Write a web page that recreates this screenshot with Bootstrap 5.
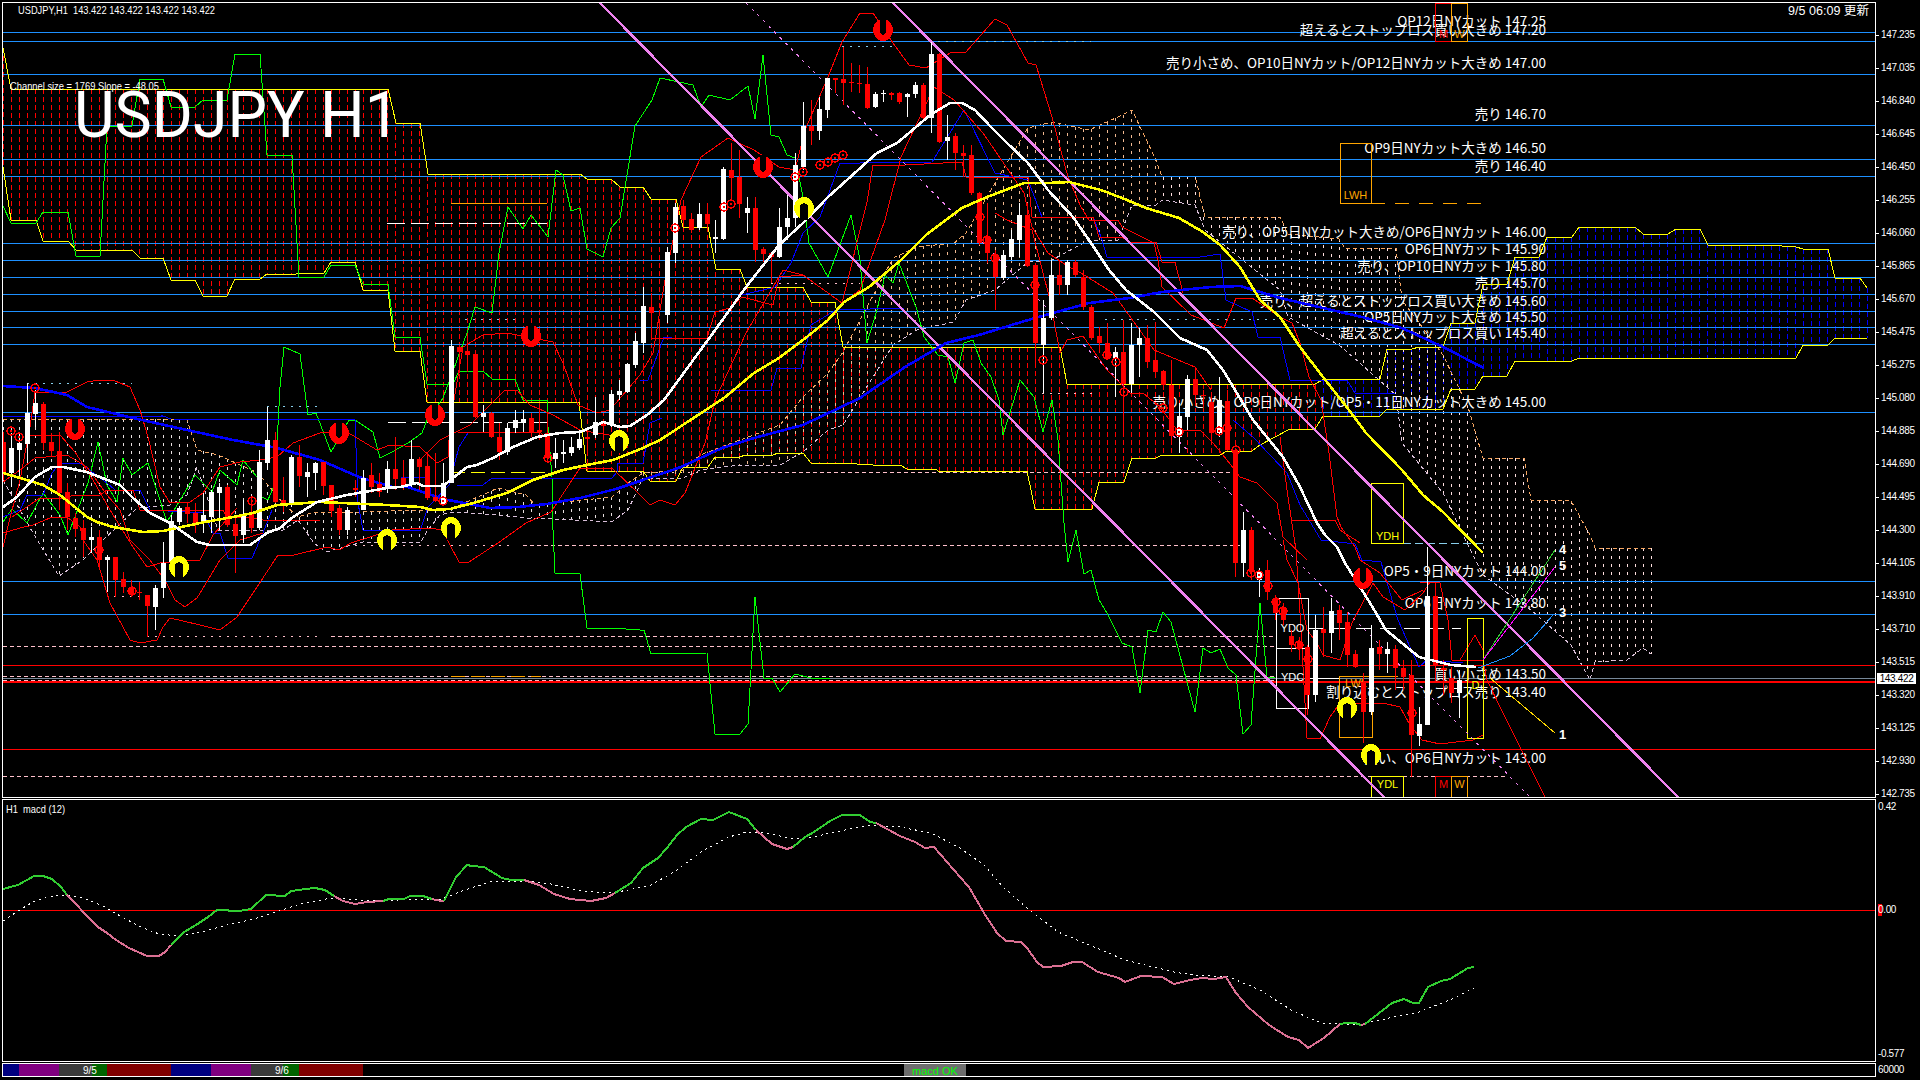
<!DOCTYPE html>
<html lang="ja">
<head>
  <meta charset="UTF-8">
  <title>USDJPY H1</title>
  <link href="https://cdn.jsdelivr.net/npm/bootstrap@5.3.0/dist/css/bootstrap.min.css" rel="stylesheet" />
  <style>
    html, body { background: #000; height: 100%; overflow: hidden; }
    body { padding: 2px 0 0 2px; font-family: "Liberation Sans", sans-serif; font-size: 10px; }
    svg { display: block; }
    svg text { font-family: "Liberation Sans", sans-serif; }
    .chart-main { width: 1874px; height: 796px; }
    .chart-macd { width: 1874px; height: 263px; }
    .chart-strip { width: 1874px; height: 14px; }
    .row-gap { margin-top: 1px; }
    .axis { width: 44px; color: #fff; letter-spacing: -.35px; line-height: 12px; }
    .axis-main { padding-top: 16.5px; height: 796px; }
    .axis-main > .price { height: 33px; flex-shrink: 0; }
    .tick { width: 3px; height: 1px; background: #fff; margin-right: 2px; flex-shrink: 0; }
    .last-price { top: 671px; left: 1px; width: 39px; height: 11px; background: #fff; color: #000; line-height: 11px; text-align: center; }
    .axis-macd { padding: 2px 0 0 2px; height: 263px; }
    .axis-macd .zero { margin-top: 91px; background: linear-gradient(#f00, #f00) no-repeat 0 0 / 4px 100%; }
    .axis-macd .low { margin-top: 132px; }
    .axis-strip { padding: 1px 0 0 2px; }
    .seg { height: 12px; line-height: 14px; color: #fff; white-space: nowrap; flex-shrink: 0; }
    .seg-navy { background: #000080; }
    .seg-purple { background: #800080; }
    .seg-gray { background: #3a3a3a; position: relative; z-index: 1; }
    .seg-green { background: #006400; }
    .seg-maroon { background: #800000; }
    .seg-macd { margin-left: 541px; background: #6e6e6e; color: #0f0; font-size: 11px; text-align: center; }
  </style>
</head>
<body class="bg-black">
<div class="d-flex">
  <div class="chart-main border border-white" id="mainChart"></div>
  <div class="axis axis-main d-flex flex-column position-relative" id="mainAxis"></div>
</div>
<div class="d-flex row-gap">
  <div class="chart-macd border border-white" id="macdChart"></div>
  <div class="axis axis-macd d-flex flex-column">
    <div>0.42</div>
    <div class="zero">0.00</div>
    <div class="low">-0.577</div>
  </div>
</div>
<div class="d-flex row-gap">
  <div class="chart-strip border border-white d-flex">
    <div class="seg seg-navy" style="width:16px"></div>
    <div class="seg seg-purple" style="width:40px"></div>
    <div class="seg seg-gray ps-4" style="width:33px">9/5</div>
    <div class="seg seg-green" style="width:15px"></div>
    <div class="seg seg-maroon" style="width:64px"></div>
    <div class="seg seg-navy" style="width:40px"></div>
    <div class="seg seg-purple" style="width:40px"></div>
    <div class="seg seg-gray ps-4" style="width:32px">9/6</div>
    <div class="seg seg-green" style="width:16px"></div>
    <div class="seg seg-maroon" style="width:64px"></div>
    <div class="seg seg-macd" style="width:62px">macd OK</div>
  </div>
  <div class="axis axis-strip">60000</div>
</div>

<script>
  // everything below is in page pixels, read off the chart. bars sit every 8px: x = 3 + 8i
  const DODGER = "#1e90ff", RED = "#ff0000", YELLOW = "#ffff00", LIME = "#00ff00", BLUE = "#0000ff";
  const PINK = "#ffc0cb", VIOLET = "#ee82ee", ORANGE = "#ffa500", SKY = "#87ceeb", SAND = "#f4a460";

  // [bar, colour, high, body top, body bottom, low]
  const candles = [
    [0,"r",432,442,472,480],[1,"w",433,448,473,487],[2,"w",433,443,450,477],[3,"w",383,413,444,463],[4,"w",390,403,414,427],
    [5,"r",402,404,443,450],[6,"r",433,442,451,457],[7,"r",432,451,493,510],[8,"r",483,492,517,530],[9,"r",513,518,529,537],
    [10,"r",520,528,540,557],[11,"w",527,537,540,553],[12,"r",530,537,560,567],[13,"w",555,557,560,592],[14,"r",557,557,580,597],
    [15,"r",572,579,587,593],[16,"r",580,587,595,597],[17,"r",582,592,593,600],[18,"r",595,595,606,637],[19,"w",585,588,607,630],
    [20,"w",542,563,588,598],[21,"w",515,521,562,563],[22,"w",506,508,522,525],[23,"r",502,507,514,523],[24,"r",503,513,524,533],
    [25,"w",493,515,521,533],[26,"w",490,492,517,533],[27,"w",483,487,493,530],[28,"r",485,487,525,527],[29,"r",517,524,536,573],
    [30,"w",500,515,535,543],[31,"r",497,513,528,533],[32,"w",450,462,528,530],[33,"w",407,440,463,470],[34,"r",432,440,502,503],
    [35,"r",477,500,503,512],[36,"w",455,457,503,507],[37,"r",445,457,476,487],[38,"w",463,472,477,497],[39,"w",462,463,473,490],
    [40,"r",462,462,486,495],[41,"r",485,485,511,517],[42,"r",505,508,530,535],[43,"w",507,510,530,535],[44,"r",480,488,490,497],
    [45,"w",470,478,510,510],[46,"r",463,475,487,493],[47,"r",473,484,492,497],[48,"w",461,469,488,493],[49,"r",437,469,479,490],
    [50,"r",460,478,486,490],[51,"w",440,459,483,487],[52,"r",457,459,467,490],[53,"r",455,466,498,500],[54,"r",453,497,501,502],
    [55,"w",463,483,504,505],[56,"w",340,346,483,483],[57,"r",347,347,352,373],[58,"r",333,351,355,372],[59,"r",353,354,417,418],
    [60,"w",405,413,417,432],[61,"r",412,413,437,438],[62,"r",423,437,452,460],[63,"w",423,428,452,455],[64,"w",410,420,428,433],
    [65,"w",410,419,423,432],[66,"r",413,418,432,437],[67,"r",403,430,432,440],[68,"r",413,433,458,462],[69,"w",438,453,459,468],
    [70,"w",440,452,454,463],[71,"w",437,447,453,456],[72,"w",430,439,448,450],[73,"r",430,437,439,453],[74,"w",397,422,435,438],
    [75,"r",420,423,426,440],[76,"w",390,394,425,427],[77,"w",380,391,395,400],[78,"w",363,364,392,393],[79,"w",333,341,365,368],
    [80,"w",287,306,343,353],[81,"r",293,307,313,340],[82,"r",323,338,339,400],[83,"w",247,252,315,323],[84,"w",203,207,253,263],
    [85,"r",200,206,220,227],[86,"r",213,219,230,233],[87,"w",203,214,228,230],[88,"r",203,214,224,230],[89,"w",220,237,239,253],
    [90,"w",167,169,239,240],[91,"r",143,170,178,200],[92,"r",150,177,204,218],[93,"w",197,208,213,233],[94,"r",197,208,250,262],
    [95,"r",247,249,254,262],[96,"r",253,253,257,283],[97,"w",208,227,257,258],[98,"w",195,218,227,240],[99,"w",153,165,218,227],
    [100,"w",102,126,167,170],[101,"r",100,126,131,145],[102,"w",97,109,131,140],[103,"w",78,78,110,118],[104,"r",78,78,80,93],
    [105,"r",47,79,83,105],[106,"r",63,82,83,92],[107,"r",65,83,84,93],[108,"r",67,84,108,109],[109,"w",92,94,107,108],
    [110,"w",90,93,94,102],[111,"r",92,93,95,100],[112,"r",92,93,102,104],[113,"w",93,94,97,117],[114,"w",82,85,94,98],
    [115,"r",83,85,118,120],[116,"w",42,54,118,133],[117,"r",53,54,142,143],[118,"w",115,137,141,160],[119,"r",133,136,153,170],
    [120,"r",145,153,156,177],[121,"r",145,155,193,195],[122,"r",192,193,243,245],[123,"r",203,237,253,263],[124,"r",250,255,277,310],
    [125,"w",250,255,278,280],[126,"w",230,239,257,260],[127,"w",203,215,240,257],[128,"r",203,215,266,267],[129,"r",263,265,343,363],
    [130,"w",300,318,345,393],[131,"w",260,275,318,320],[132,"r",260,275,285,295],[133,"w",260,262,285,295],[134,"r",260,262,275,277],
    [135,"r",270,277,307,310],[136,"r",305,307,338,340],[137,"r",327,336,343,353],[138,"r",323,343,358,360],[139,"w",347,352,358,397],
    [140,"r",320,352,384,433],[141,"w",323,345,384,393],[142,"w",328,338,345,377],[143,"r",325,338,362,368],[144,"r",322,360,372,378],
    [145,"r",370,371,385,390],[146,"r",360,385,436,442],[147,"w",403,416,437,453],[148,"w",375,379,417,430],[149,"r",368,379,395,406],
    [150,"r",390,395,396,407],[151,"r",395,402,433,445],[152,"w",377,400,433,437],[153,"r",390,401,450,451],[154,"r",449,450,563,577],
    [155,"w",512,530,563,577],[156,"r",527,530,572,580],[157,"w",568,572,580,597],[158,"r",560,570,592,600],[159,"r",595,598,613,620],
    [160,"r",603,608,620,625],[161,"r",630,636,645,652],[162,"r",637,642,648,660],[163,"r",645,647,695,715],[164,"w",615,630,695,702],
    [165,"r",607,629,633,657],[166,"w",598,611,633,653],[167,"r",605,610,623,640],[168,"r",612,622,655,667],[169,"r",650,654,667,668],
    [170,"r",673,682,712,743],[171,"w",625,648,712,715],[172,"r",640,647,654,670],[173,"w",642,649,654,673],[174,"r",645,649,668,690],
    [175,"r",660,668,677,690],[176,"r",660,675,735,777],[177,"w",707,724,736,746],[178,"w",547,596,725,725],[179,"r",583,596,665,683],
    [180,"r",660,668,670,695],[181,"r",667,678,693,703],[182,"w",670,680,693,718]
  ];

  const hLines = [
    [32.5,DODGER],[41.5,DODGER],[74.5,DODGER],[125.5,DODGER],[159.5,DODGER],[176.5,DODGER],[243.5,DODGER],[260.5,DODGER],
    [277.5,DODGER],[294.5,DODGER],[311.5,DODGER],[327.5,DODGER],[344.5,DODGER],[412.5,DODGER],[581.5,DODGER],[614.5,DODGER],
    [665.5,RED],[749.5,RED]
  ];
  // [x1, x2, y, colour, dash]
  const segments = [
    [3,1276,646.5,PINK,"4 3"],[3,1507,776.5,PINK,"4 3"],[3,1276,676.5,PINK,"4 3"],[3,1276,680.5,PINK,"4 3"],
    [331,1276,636.5,PINK,"4 3"],[523,1240,545.5,PINK,"4 3"],[715,1240,472.5,PINK,"4 3"],
    [147,322,636.5,PINK,"2 6"],[114,139,596.5,PINK,"2 6"],[347,514,545.5,PINK,"2 6"],[771,860,283.5,PINK,"2 6"],[640,707,472.5,PINK,"2 6"],[1042,1092,393.5,PINK,"2 6"],
    [842,898,46.5,SKY,"2 6"],[938,1091,41.5,SKY,"2 6"],[27,132,383.5,SKY,"2 6"],[267,322,406.5,SKY,"2 6"],[465,515,319.5,SKY,"2 6"],[1105,1290,319.5,SKY,"2 6"],[1403,1483,543.5,SKY,"8 4"],
    [387,547,223.5,"#fff","18 6"],[388,547,422.5,"#fff","18 6"],[1308,1461,628.5,"#fff","16 8"],[1308,1340,678.5,"#fff",""],
    [451,547,203.5,ORANGE,""],[451,547,472.5,YELLOW,"14 6"],[451,541,676.5,ORANGE,"14 6"],[1371,1483,203.5,ORANGE,"14 10"],[1372,1398,676.5,ORANGE,""],
    [1371,1468,797,YELLOW,"3 9"]
  ];

  // ichimoku cloud 1 edges, the yellow lines
  const kumoUp = [[3,48],[11,89],[388,89],[396,123],[420,123],[428,174],[580,174],[587,179],[611,179],[620,187],[643,187],[651,199],[676,199],[683,227],[708,227],[716,269],[740,269],[747,287],[803,287],[811,302],[835,302],[843,347],[1060,347],[1067,384],[1315,384],[1324,379],[1380,379],[1387,349],[1412,349],[1419,347],[1443,347],[1451,323],[1475,323],[1483,284],[1507,284],[1515,257],[1539,257],[1547,237],[1572,237],[1579,227],[1635,227],[1643,234],[1668,234],[1676,229],[1700,229],[1708,245],[1768,245],[1796,247],[1803,249],[1828,249],[1835,278],[1860,278],[1867,288]];
  const kumoDown = [[3,167],[11,220],[36,220],[43,241],[68,241],[76,250],[132,250],[140,258],[163,258],[171,280],[195,280],[203,296],[227,296],[235,279],[260,279],[267,274],[296,274],[299,273],[324,273],[331,262],[355,262],[363,290],[388,290],[395,351],[420,351],[427,402],[579,402],[587,471],[643,471],[650,481],[676,481],[683,467],[708,467],[715,457],[740,457],[745,455],[773,455],[778,453],[803,453],[811,463],[840,463],[873,465],[900,465],[907,469],[936,469],[938,471],[1027,471],[1035,509],[1092,509],[1099,482],[1124,482],[1132,458],[1156,458],[1162,455],[1220,455],[1227,451],[1252,451],[1260,445],[1290,429],[1315,429],[1323,416],[1380,416],[1387,409],[1443,409],[1451,389],[1475,389],[1483,376],[1507,376],[1515,361],[1572,361],[1579,358],[1796,358],[1803,345],[1828,345],[1835,338],[1867,338]];

  // the pale cloud, [x, top, bottom]
  const pale = [[3,419,480],[33,419,533],[59,419,576],[83,419,560],[100,419,543],[137,419,508],[170,419,505],[187,420,495],[197,450,467],[218,455,530],[258,473,530],[283,503,530],[298,517,520],[314,512,543],[326,512,552],[363,512,542],[420,510,543],[428,510,530],[440,510,515],[453,508,512],[498,488,515],[526,495,518],[535,505,518],[612,497,522],[628,483,510],[643,473,478],[683,470,478],[700,455,470],[740,440,465],[780,425,465],[803,397,452],[828,373,430],[843,352,425],[893,258,345],[917,247,330],[954,243,322],[966,233,300],[995,183,290],[1028,128,262],[1052,122,260],[1089,130,240],[1118,117,240],[1132,110,205],[1156,160,205],[1162,177,200],[1195,176,205],[1205,217,230],[1280,217,290],[1288,234,317],[1339,239,345],[1345,248,350],[1396,248,395],[1402,300,443],[1443,355,493],[1468,407,545],[1483,458,575],[1524,458,605],[1531,500,610],[1571,501,645],[1590,535,680],[1595,548,662],[1627,548,660],[1643,548,648],[1651,548,654]];

  const green1 = [[3,206],[11,223],[36,223],[43,212],[68,212],[76,256],[100,256],[107,126],[132,126],[140,79],[163,79],[171,107],[195,107],[203,100],[227,100],[235,54],[260,54],[267,155],[292,155],[299,277],[324,277],[331,265],[355,265],[363,284],[388,284],[395,337],[420,337],[427,384],[453,384],[459,371],[483,371],[492,379],[515,379],[523,400],[547,400],[548,427],[552,477],[553,530],[555,573],[580,574],[587,628],[612,628],[640,630],[644,630],[651,654],[707,653],[715,734],[740,734],[748,724],[755,597],[764,678],[772,678],[780,692],[795,674],[811,678],[830,678]];
  const green2 = [[3,522],[12,509],[27,523],[43,493],[60,515],[68,535],[88,483],[98,442],[107,485],[117,502],[123,458],[132,475],[148,463],[167,522],[195,475],[212,492],[220,470],[237,485],[243,460],[257,477],[258,495],[268,500],[275,483],[280,387],[284,347],[300,354],[306,400],[308,415],[316,413],[331,452],[349,420],[355,420],[373,432],[380,458],[392,452],[408,443],[422,433],[427,420],[443,398],[467,333],[475,307],[492,313],[499,253],[508,207],[523,229],[531,215],[548,237],[556,170],[563,175],[571,211],[580,208],[587,249],[603,257],[611,228],[620,218],[635,126],[652,100],[660,78],[693,85],[701,107],[709,95],[730,100],[748,86],[755,119],[763,55],[771,135],[779,137],[787,155],[795,158],[803,197],[809,243],[828,277],[851,215],[860,260],[867,343],[877,310],[885,275],[893,283],[899,263],[917,310],[924,337],[938,355],[948,357],[955,383],[964,343],[973,340],[981,363],[991,377],[999,400],[1003,435],[1013,403],[1020,380],[1034,397],[1043,432],[1052,400],[1058,440],[1064,523],[1068,562],[1076,530],[1084,574],[1091,570],[1099,600],[1107,613],[1122,643],[1132,647],[1140,693],[1148,630],[1156,632],[1163,612],[1171,622],[1195,712],[1203,648],[1211,653],[1220,649],[1228,668],[1236,675],[1243,734],[1251,725],[1260,603],[1267,677],[1275,678]];

  const whiteMa = [[3,507],[17,497],[35,477],[52,467],[63,467],[87,472],[120,485],[133,498],[150,513],[170,523],[197,542],[210,545],[250,545],[267,533],[280,528],[293,517],[317,502],[347,495],[387,488],[400,487],[417,483],[423,486],[443,486],[453,478],[467,467],[477,465],[493,458],[513,447],[537,437],[560,433],[580,432],[597,425],[603,422],[620,427],[630,426],[647,415],[664,400],[713,333],[746,287],[779,245],[803,223],[828,197],[877,153],[897,143],[909,133],[930,115],[950,103],[962,103],[975,110],[991,127],[1007,143],[1028,163],[1048,190],[1073,217],[1089,240],[1109,270],[1126,290],[1154,312],[1180,338],[1207,350],[1223,370],[1253,420],[1283,457],[1300,487],[1317,523],[1325,535],[1337,547],[1345,563],[1370,603],[1386,630],[1419,657],[1451,665],[1476,667]];
  const yellowMa = [[3,473],[27,480],[43,485],[60,495],[87,517],[97,522],[113,527],[143,532],[163,531],[177,528],[200,523],[233,517],[253,513],[277,505],[320,502],[387,505],[420,507],[433,510],[450,509],[477,502],[507,493],[533,480],[563,470],[587,465],[613,460],[643,448],[660,440],[724,398],[754,373],[779,358],[803,340],[828,320],[844,302],[869,287],[901,260],[926,235],[962,208],[987,197],[1024,183],[1048,183],[1069,182],[1101,190],[1122,198],[1146,208],[1179,218],[1203,232],[1220,245],[1240,267],[1260,300],[1280,317],[1300,347],[1323,377],[1349,410],[1366,433],[1402,470],[1423,495],[1443,512],[1483,553]];
  const blueMa = [[3,386],[35,388],[67,395],[87,407],[133,418],[187,430],[233,440],[277,448],[320,460],[359,477],[392,487],[408,487],[443,499],[490,508],[518,507],[547,504],[580,498],[616,489],[640,481],[681,467],[722,448],[754,438],[803,425],[860,398],[905,367],[946,343],[979,335],[1028,320],[1089,303],[1130,298],[1162,292],[1211,287],[1240,286],[1260,292],[1280,298],[1362,317],[1402,328],[1443,347],[1484,368]];

  const thinBlue = [
    [[3,517],[20,510],[27,495],[43,495],[52,473],[60,463],[80,463],[107,483],[115,490],[140,490],[150,510],[203,513],[213,533],[220,533],[228,558],[252,558],[263,533],[272,510]],
    [[3,417],[163,416],[171,419],[355,420],[358,503],[363,530],[420,531],[428,507],[449,485],[459,447],[468,433]],
    [[401,477],[428,477],[431,493]],
    [[457,485],[483,485],[492,478],[612,478],[617,472],[618,463],[643,463],[650,423],[662,418]],
    [[640,380],[648,380],[664,337],[672,337]],
    [[711,390],[771,390],[777,368],[801,368],[811,325],[836,310],[905,308]],
    [[742,295],[775,287],[791,263],[803,233],[820,217],[840,163],[860,163],[932,162],[964,110],[995,173],[1028,180],[1042,217],[1093,217],[1101,237],[1107,257],[1200,257],[1220,254],[1226,300],[1252,312],[1258,337],[1280,337],[1290,380],[1347,380],[1355,393],[1395,393]],
    [[1233,420],[1253,437],[1287,473],[1300,505],[1321,540],[1355,544],[1362,560],[1381,562],[1398,620],[1419,667],[1427,660],[1463,663]]
  ];
  const thinRed = [
    [[3,533],[20,528],[33,525],[50,518],[67,517],[80,527],[83,540],[97,560],[110,603],[130,640],[140,643],[157,640],[163,627],[170,618],[200,625],[220,630],[237,617],[257,587],[278,555],[294,555],[327,547],[339,550],[351,543],[392,530],[428,528],[443,530],[449,543],[459,562],[469,562],[498,543],[526,523],[551,512],[580,468],[612,468],[640,495],[650,505],[660,500],[675,505],[685,493],[705,443],[715,400],[746,333],[783,270],[803,275],[842,303],[860,290],[885,220],[901,157],[934,87],[954,100],[983,133],[1024,193],[1032,227],[1048,253],[1069,267],[1081,273],[1113,293],[1154,350],[1195,367],[1211,390]],
    [[3,547],[10,518],[20,480],[30,427],[35,392],[65,393],[87,382],[100,380],[115,381],[130,387],[140,410],[148,437],[160,487],[170,503],[190,502],[203,493],[220,467],[240,462],[260,460],[277,457],[293,443],[320,433],[347,432],[377,450],[390,445],[420,447],[437,463],[448,457],[450,423],[463,347],[483,335],[507,333],[553,342],[563,363],[578,405],[597,413],[610,410],[640,375],[653,353],[665,280],[681,200],[701,157],[728,138],[754,150],[779,167],[795,170],[805,130],[828,77],[842,42],[860,13],[873,13],[893,43],[909,65],[926,68],[950,53],[966,52],[995,19],[1007,25],[1028,63],[1036,65],[1052,117],[1068,177],[1081,207],[1089,220],[1118,220],[1122,227],[1154,243],[1158,260],[1162,287],[1191,315],[1224,328],[1236,298],[1252,298],[1280,317],[1292,323],[1300,343],[1309,377],[1321,400],[1329,453],[1337,517],[1341,527],[1355,547],[1360,560],[1380,573],[1402,600],[1423,590]],
    [[3,482],[20,470],[35,458],[67,455],[87,467],[107,495],[120,510],[130,540],[150,560],[165,580],[175,600],[185,607],[197,598],[220,560],[240,540],[263,533]],
    [[12,517],[40,498],[67,498],[73,495],[100,495],[107,490],[133,490],[140,510],[223,510],[227,517],[250,517],[263,520],[320,520]],
    [[30,435],[60,435],[75,452],[93,480],[110,510],[133,547],[147,567],[160,563],[200,560],[213,535],[237,508]],
    [[420,460],[440,440],[470,425],[505,390],[517,390],[530,405],[553,415],[580,430],[620,437]],
    [[458,432],[540,432],[548,440]],
    [[652,338],[707,338],[715,312],[730,308],[742,297],[773,305],[779,277],[803,275],[842,303],[867,202],[873,165],[905,165],[962,162],[966,177],[1028,177],[1032,217],[1093,217],[1099,237],[1122,237],[1130,242],[1156,242],[1162,262],[1175,262],[1183,293]],
    [[995,213],[1007,220],[1032,230],[1050,300],[1060,353],[1067,340],[1083,336],[1107,370],[1120,383],[1130,393],[1143,393],[1160,407],[1177,430],[1200,430],[1213,443],[1227,460],[1240,477],[1257,483],[1277,503],[1283,537],[1307,560]],
    [[1280,437],[1288,497],[1296,550],[1300,613],[1307,738],[1320,739],[1330,717],[1340,703],[1383,703],[1400,707],[1410,725],[1422,740],[1440,744],[1473,740],[1483,735]],
    [[1283,540],[1287,560],[1298,583],[1307,630],[1317,643],[1323,655],[1340,660],[1352,623],[1373,583],[1383,597],[1405,610],[1423,593],[1430,582],[1440,583],[1448,620],[1452,660],[1483,660],[1487,680],[1503,713],[1545,797]],
    [[1291,520],[1335,520],[1340,530],[1360,543]],
    [[1420,582],[1438,582]],
    [[1460,660],[1475,635],[1483,650]]
  ];

  const redMarks = [[531,336],[883,30],[763,167],[75,429],[339,433],[435,415],[1363,578]];
  const yellowMarks = [[179,567],[387,540],[451,528],[619,441],[804,208],[1347,708],[1371,755]];
  const rings = [[35,388],[11,431],[19,437],[99,550],[132,591],[252,501],[548,458],[443,501],[675,228],[724,207],[731,204],[795,177],[803,172],[820,165],[828,162],[835,158],[843,155],[980,217],[987,240],[995,258],[1035,285],[1043,360],[1107,355],[1116,362],[1124,392],[1163,408],[1179,432],[1219,431],[1227,428],[1236,450],[1251,573],[1259,575],[1268,586],[1276,602],[1283,611],[1299,645],[1308,659],[1412,713]];

  // [text, y centre]
  const labels = [
    ["OP12日NYカット 147.25",21],["超えるとストップロス買い大きめ 147.20",30],["売り小さめ、OP10日NYカット/OP12日NYカット大きめ 147.00",63],
    ["売り 146.70",114],["OP9日NYカット大きめ 146.50",148],["売り 146.40",166],["売り、OP5日NYカット大きめ/OP6日NYカット 146.00",232],
    ["OP6日NYカット 145.90",249],["売り、OP10日NYカット 145.80",266],["売り 145.70",283],["売り、超えるとストップロス買い大きめ 145.60",301],
    ["OP5日NYカット大きめ 145.50",317],["超えるとストップロス買い 145.40",333],["売り小さめ、OP9日NYカット/OP5・11日NYカット大きめ 145.00",402],
    ["OP5・9日NYカット 144.00",571],["OP6日NYカット 143.80",603],["買い小さめ 143.50",674],["割り込むとストップロス売り 143.40",692],["買い、OP6日NYカット 143.00",758]
  ];
  // [x, y, w, h, colour, text, text y]
  const boxes = [
    [1340,143,31,60,ORANGE,"LWH",199],[1435.5,3,16,38,RED,"M",38],[1451.5,3,16,38,ORANGE,"W",38],
    [1371.5,483,32,60,YELLOW,"YDH",540],[1276.5,598,32,50,"#fff","YDO",632],[1276.5,648,32,60,"#fff","YDC",681],
    [1339.5,676,33,61,ORANGE,"LWL",687],[1467.5,618,16,120,YELLOW,"D",689],
    [1371.5,776,32,21,YELLOW,"YDL",788],[1435.5,776,16,21,RED,"M",788],[1451.5,776,16,21,ORANGE,"W",788]
  ];

  function interp(line, x) {
    if (x <= line[0][0]) return line[0][1];
    for (let i = 1; i < line.length; i++) {
      if (x <= line[i][0]) {
        const a = line[i - 1], b = line[i];
        return b[0] === a[0] ? b[1] : a[1] + (b[1] - a[1]) * (x - a[0]) / (b[0] - a[0]);
      }
    }
    return null;
  }

  const poly = (pts, color, width = 1, dash = "") =>
    `<polyline points="${pts.join(" ")}" fill="none" stroke="${color}" stroke-width="${width}" stroke-dasharray="${dash}"/>`;
  const vline = (x, y1, y2, color, dash = "") =>
    `<line x1="${x}" x2="${x}" y1="${y1}" y2="${y2}" stroke="${color}" stroke-dasharray="${dash}"/>`;
  const hline = (x1, x2, y, color, dash = "") =>
    `<line x1="${x1}" x2="${x2}" y1="${y}" y2="${y}" stroke="${color}" stroke-dasharray="${dash}"/>`;

  // the arrow marks: a ring with a slit, yellow opens downward, red upward
  function horseshoe([x, y], color, flip, slit) {
    return `<g transform="translate(${x} ${y}) scale(1 ${flip ? -1 : 1})">
      <ellipse rx="10" ry="11" fill="${color}"/>
      <path d="M${-slit},12 L${-slit},-2 Q0,-8 ${slit},-2 L${slit},12 Z" fill="#000"/>
    </g>`;
  }

  let main = "";

  // cloud hatching
  for (let x = 3; x < 1870; x += 8) {
    const up = interp(kumoUp, x), down = interp(kumoDown, x);
    if (up !== null && down !== null) main += vline(x + .5, up, down, x < 1318 ? RED : BLUE, "5 3");
    const top = interp(pale.map(p => [p[0], p[1]]), x), bot = interp(pale.map(p => [p[0], p[2]]), x);
    if (x <= 1651 && bot - top > 4) {
      const tint = x < 640 ? "#e8e0e0" : x < 1160 ? "#f0b890" : "#ffe0e0";
      main += vline(x + .5, top, bot, tint, "3 5");
    }
  }
  main += poly(pale.map(p => [p[0], p[1]]), SAND, 1, "4 3");
  main += poly(pale.map(p => [p[0], p[2]]), "#d8bfd8", 1, "4 3");

  hLines.forEach(([y, c]) => main += hline(3, 1875, y, c));
  main += `<rect x="3" y="681" width="1872" height="2" fill="${RED}"/>`;
  main += hline(3, 1875, 678.5, "#778899");
  segments.forEach(([a, b, y, c, d]) => main += hline(a, b, y, c, d));

  labels.forEach(([t, y]) => {
    main += `<text x="1546" y="${y + 5}" text-anchor="end" font-size="13.5" fill="#fff" style="font-family:'Noto Sans CJK JP',sans-serif">${t}</text>`;
  });

  main += poly(kumoUp, YELLOW) + poly(kumoDown, YELLOW);
  main += poly(green1, LIME) + poly(green2, LIME);
  thinBlue.forEach(l => main += poly(l, BLUE));
  thinRed.forEach(l => main += poly(l, RED));

  boxes.forEach(([x, y, w, h, c, t, ty]) => {
    main += `<rect x="${x}" y="${y}" width="${w}" height="${h}" fill="none" stroke="${c}"/>`;
    main += `<text x="${x + w / 2}" y="${ty}" text-anchor="middle" font-size="11" fill="${c}">${t}</text>`;
  });

  // channel lines
  main += poly([[600,3],[1384,797]], VIOLET, 2.4) + poly([[893,3],[1678,797]], VIOLET, 2.4);
  main += poly([[746,3],[1530,797]], VIOLET, 1, "3 5");

  main += poly(blueMa, BLUE, 2.6);

  candles.forEach(([i, c, hi, top, bot, lo]) => {
    const x = 3 + 8 * i, fill = c === "r" ? RED : "#fff";
    main += vline(x + .5, hi, lo, fill);
    main += `<rect x="${x - 2}" y="${top}" width="5" height="${Math.max(bot - top, 1)}" fill="${fill}"/>`;
  });

  main += poly(yellowMa, YELLOW, 2.6) + poly(whiteMa, "#fff", 2.6);

  // forecast lines at the end of the chart
  main += poly([[1483,660],[1555,550]], "#32cd32") + poly([[1483,660],[1555,567]], "#ff00ff");
  main += poly([[1478,668],[1510,656],[1533,638],[1553,615]], DODGER) + poly([[1490,678],[1555,733]], "#ffd700");
  [["4",549],["5",565],["3",612],["1",734]].forEach(([t, y]) => {
    main += `<text x="1559" y="${y + 5}" font-size="13" font-weight="700" fill="#fff">${t}</text>`;
  });

  rings.forEach(([x, y]) => {
    main += `<circle cx="${x}" cy="${y}" r="4" fill="none" stroke="${RED}" stroke-width="1.5"/><circle cx="${x}" cy="${y}" r="1.3" fill="${RED}"/>`;
  });
  redMarks.forEach(p => main += horseshoe(p, RED, true, 3));
  yellowMarks.forEach(p => main += horseshoe(p, YELLOW, false, 4));

  main += `<text x="18" y="14" font-size="11" fill="#fff" textLength="197" lengthAdjust="spacingAndGlyphs" xml:space="preserve">USDJPY,H1  143.422 143.422 143.422 143.422</text>`;
  main += `<text x="1788" y="15" font-size="12.5" fill="#fff" textLength="81" lengthAdjust="spacingAndGlyphs" style="font-family:'Liberation Sans','Noto Sans CJK JP',sans-serif">9/5 06:09 更新</text>`;
  main += `<text x="10" y="90" font-size="11" fill="#fff" textLength="149" lengthAdjust="spacingAndGlyphs">Channel size = 1769 Slope = -48.05</text>`;
  main += `<text x="74" y="137" fill="#fff" font-size="64" textLength="326" lengthAdjust="spacingAndGlyphs" style="font-family:Roboto,sans-serif">USDJPY H1</text>`;

  document.getElementById("mainChart").innerHTML =
    `<svg width="1872" height="794" viewBox="3 3 1872 794" shape-rendering="crispEdges">${main}</svg>`;

  // axis labels
  const prices = ["147.235","147.035","146.840","146.645","146.450","146.255","146.060","145.865","145.670","145.475","145.275","145.080","144.885","144.690","144.495","144.300","144.105","143.910","143.710","143.515","143.320","143.125","142.930","142.735"];
  document.getElementById("mainAxis").innerHTML =
    prices.map(p => `<div class="price d-flex align-items-center"><span class="tick"></span>${p}</div>`).join("") +
    `<div class="last-price position-absolute">143.422</div>`;

  // macd pane, points read off in two strips
  const fromLeft = pts => pts.map(([x, y]) => [Math.round(x / 1.633), Math.round(780 + y / 3)]);
  const fromRight = pts => pts.map(([x, y]) => [Math.round(960 + x / 1.633), Math.round(780 + y / 3)]);
  const macdRuns = [
    ["g",[[5,328],[30,316],[55,288],[70,288],[85,297],[100,320],[110,345]]],
    ["p",[[110,345],[125,375],[135,395],[160,440],[175,458],[190,480],[210,503],[240,527],[260,527],[270,515],[280,495]]],
    ["g",[[280,495],[300,455],[320,435],[340,410],[355,390],[370,390],[375,393],[390,393],[410,388],[435,345],[465,348],[475,333],[500,328],[515,323],[530,330],[545,348]]],
    ["p",[[545,348],[560,363],[580,372],[600,365],[625,362]]],
    ["g",[[625,362],[635,356],[660,357],[670,348],[690,348],[705,358]]],
    ["p",[[705,358],[720,363],[725,362]]],
    ["g",[[725,362],[745,290],[762,255],[770,258],[790,262],[820,293],[835,300],[855,300]]],
    ["p",[[855,300],[880,315],[905,343],[930,358],[965,362],[990,355],[1005,340]]],
    ["g",[[1005,340],[1030,310],[1050,265],[1075,235],[1090,205],[1105,165],[1120,140],[1145,117],[1165,120],[1190,97],[1220,118],[1235,150]]],
    ["p",[[1235,150],[1260,193],[1285,207],[1295,200]]],
    ["g",[[1295,200],[1315,170],[1330,155],[1355,122],[1375,105],[1405,105],[1420,125],[1430,130]]],
    ["p",[[1430,130],[1470,168],[1495,185],[1510,205],[1525,200],[1568,290]]]
  ];
  const macdRunsRight = [
    ["p",[[0,290],[15,320],[40,400],[60,460],[75,483],[100,487],[110,503],[125,545],[135,560],[165,558],[185,545],[200,547],[225,575],[260,595],[270,605],[295,587],[330,590],[350,613],[375,600],[395,593],[415,597],[435,590],[450,640],[470,680],[505,735],[535,770],[553,780],[568,805],[595,775],[620,733]]],
    ["g",[[620,733],[630,728],[645,728],[655,735]]],
    ["p",[[655,735],[662,733]]],
    ["g",[[662,733],[690,690],[705,670],[725,658],[740,668],[750,668],[765,620],[785,603],[800,597],[830,565],[840,560]]]
  ];
  const signal = fromLeft([[5,422],[25,400],[50,370],[75,352],[105,345],[130,350],[165,375],[200,410],[230,440],[260,463],[290,468],[330,455],[370,435],[415,417],[450,395],[490,373],[540,355],[590,360],[650,360],[720,358],[760,330],[800,307],[860,303],[900,312],[950,333],[1000,340],[1060,318],[1100,275],[1150,210],[1190,170],[1220,157],[1250,160],[1290,175],[1320,175],[1380,150],[1420,135],[1470,140],[1520,160],[1568,205]])
    .concat(fromRight([[0,205],[40,255],[70,320],[110,385],[160,455],[200,485],[270,540],[350,575],[380,585],[440,590],[490,630],[540,690],[590,730],[650,735],[700,715],[750,697],[800,660],[840,625]]));

  let macd = hline(3, 1875, 910.5, RED);
  macd += poly(signal, "#fff", 1, "2 4");
  const macdColor = k => k === "g" ? "#32cd32" : "#db7093";
  macdRuns.forEach(([k, pts]) => macd += poly(fromLeft(pts), macdColor(k), 2));
  macdRunsRight.forEach(([k, pts]) => macd += poly(fromRight(pts), macdColor(k), 2));
  macd += `<text x="6" y="813" font-size="10.5" fill="#fff" textLength="59" lengthAdjust="spacingAndGlyphs" xml:space="preserve">H1  macd (12)</text>`;

  document.getElementById("macdChart").innerHTML =
    `<svg width="1872" height="261" viewBox="3 800 1872 261" shape-rendering="crispEdges">${macd}</svg>`;
</script>
<script src="https://cdn.jsdelivr.net/npm/bootstrap@5.3.0/dist/js/bootstrap.bundle.min.js"></script>
</body>
</html>
